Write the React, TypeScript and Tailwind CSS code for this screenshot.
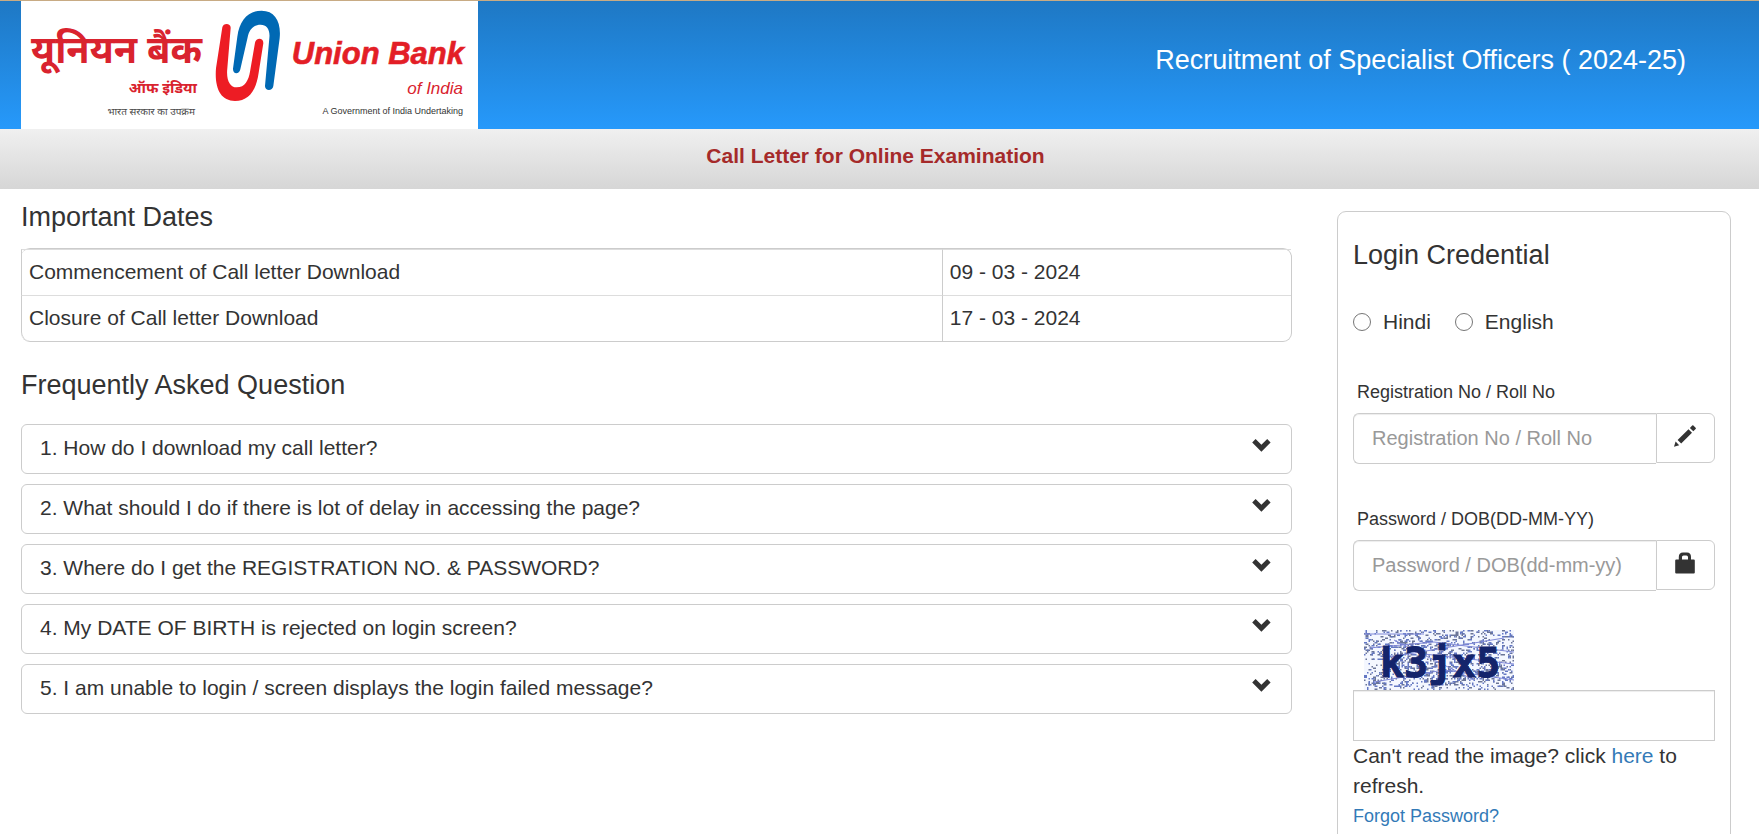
import React from "react";

const questions = [
  "1. How do I download my call letter?",
  "2. What should I do if there is lot of delay in accessing the page?",
  "3. Where do I get the REGISTRATION NO. & PASSWORD?",
  "4. My DATE OF BIRTH is rejected on login screen?",
  "5. I am unable to login / screen displays the login failed message?",
];

const dates = [
  { label: "Commencement of Call letter Download", value: "09 - 03 - 2024" },
  { label: "Closure of Call letter Download", value: "17 - 03 - 2024" },
];

function BankLogo() {
  return (
    <svg
      viewBox="0 0 457 128"
      className="h-32 w-[457px] shrink-0 bg-white"
      role="img"
      aria-label="Union Bank of India"
    >
      <g fill="#d9232e" fontFamily="'Noto Sans Devanagari', 'Lohit Devanagari', 'Noto Sans', FreeSans, sans-serif" fontWeight="700">
        <text x="10" y="62" fontSize="38">यूनियन बैंक</text>
        <text x="176" y="92" fontSize="15" textAnchor="end">ऑफ इंडिया</text>
        <text x="174" y="114" fontSize="10" fontWeight="400" fill="#4a4a4a" textAnchor="end">
          भारत सरकार का उपक्रम
        </text>
      </g>
      <g transform="translate(-21 -1) scale(0.33333)">
        <path
          fill="#ed1c24"
          d="M667 82C669 68 693 68 692 84L682 205C678 240 690 262 710 262C735 262 746 240 750 215L765 128C768 112 791 112 790 130L776 218C768 275 745 303 705 303C662 303 643 265 648 205Z"
        />
        <path
          fill="#0069b4"
          d="M699 206L712 110C719 60 745 32 785 32C825 32 844 65 839 115L820 258C818 274 795 274 795 258L808 115C811 88 800 74 782 74C762 74 747 88 743 112L721 208C718 224 698 224 699 206Z"
        />
      </g>
      <g fontFamily="'Liberation Sans', Arial, sans-serif" textAnchor="end">
        <text x="443" y="63" fontSize="31" fontWeight="700" fontStyle="italic" fill="#e31e26" stroke="#e31e26" strokeWidth="0.6">
          Union Bank
        </text>
        <text x="442" y="93" fontSize="17" fontStyle="italic" fill="#d9232e">of India</text>
        <text x="442" y="113" fontSize="9" fill="#333333">A Government of India Undertaking</text>
      </g>
    </svg>
  );
}

function Chevron() {
  return (
    <svg viewBox="0 0 19 13" className="h-[13px] w-[19px]" aria-hidden="true">
      <path fill="#333333" d="M3.6 0L0.2 3.6L9.4 12.7L18.6 3.6L15.2 0L9.4 5.8Z" />
    </svg>
  );
}

function Pencil() {
  return (
    <svg viewBox="0 0 22 22" className="h-[22px] w-[22px]" aria-hidden="true">
      <path fill="#333333" d="M0 21.8L1.6 16.6L5.2 20.2ZM3.6 14.9L14.5 4.2L18 7.7L7.2 18.4ZM15.9 2.9L18.2 0.6Q18.8 0 19.4 0.6L21.6 2.8Q22.2 3.4 21.6 4L19.3 6.3Z" />
    </svg>
  );
}

function Lock() {
  return (
    <svg viewBox="0 0 20 22" className="h-[22px] w-[20px]" aria-hidden="true">
      <path
        fill="#333333"
        fillRule="evenodd"
        d="M3.8 7.4V5Q3.8 0.4 8 0.4H12Q16 0.4 16 5V7.4H18.8Q19.8 7.4 19.8 8.4V20.4Q19.8 21.4 18.8 21.4H1.2Q0.2 21.4 0.2 20.4V8.4Q0.2 7.4 1.2 7.4ZM7 7.4H13V5Q13 3.4 11.4 3.4H8.6Q7 3.4 7 5Z"
      />
    </svg>
  );
}

/* Seeded speckles, so that the noise is the same on every render. */
function speckles(seed: number, density: number) {
  let s = seed;
  const next = () => {
    s = (s * 1103515245 + 12345) % 2147483648;
    return s / 2147483648;
  };
  let d = "";
  for (let y = 0; y < 40; y++) {
    for (let x = 0; x < 100; x++) {
      const busy = x > 20 && x < 90 && y > 6 && y < 34 ? 1.25 : 0.8;
      if (next() < density * busy) {
        const run = next() < 0.3 ? 2 : 1;
        d += `M${x * 1.5} ${y * 1.5}h${run * 1.5}v1.5h-${run * 1.5}z`;
      }
    }
  }
  return d;
}
const greySpecks = speckles(7, 0.16);
const blueSpecks = speckles(91, 0.14);

function Captcha() {
  return (
    <svg viewBox="0 0 150 60" className="ml-[11px] block h-[60px] w-[150px] bg-[#f4f7ff]" role="img" aria-label="Captcha">
      <path d={greySpecks} fill="#6a7598" />
      <path d={blueSpecks} fill="#6478c4" />
      <g fill="none" stroke="#7f88d8" strokeWidth="1">
        <path d="M0 4H60M5 18L70 12L150 22M20 28L140 8M10 52L80 40L150 50M60 24L150 34M30 10L110 50" />
      </g>
      <text
        x="16"
        y="47"
        fontFamily="'DejaVu Sans Mono', monospace"
        fontWeight="700"
        fontSize="40"
        fill="#14246b"
        stroke="#14246b"
        strokeWidth="1"
      >
        k3jx5
      </text>
    </svg>
  );
}

const inputClass =
  "h-[51px] border border-[#cccccc] bg-white px-[18px] text-[20px] text-[#555555] shadow-[inset_0_1px_1px_rgba(0,0,0,0.075)] outline-none placeholder:text-[#999999] placeholder:opacity-100";

const radioClass =
  "h-[18px] w-[18px] appearance-none rounded-full border border-[#767676] checked:border-[6px]";

function Field(props: { id: string; label: string; placeholder: string; type: string; icon: React.ReactNode }) {
  return (
    <div className="mt-[42px]">
      <label htmlFor={props.id} className="mb-2 block pl-1 text-[18px] leading-[26px]">
        {props.label}
      </label>
      <div className="flex items-start">
        <input
          id={props.id}
          type={props.type}
          placeholder={props.placeholder}
          className={`${inputClass} min-w-0 flex-1 rounded-l-md border-r-0`}
        />
        <span className="flex h-[50px] w-[59px] shrink-0 justify-center rounded-r-md border border-[#cccccc] pr-0.5 pt-[11px]">
          {props.icon}
        </span>
      </div>
    </div>
  );
}

export default function App() {
  return (
    <div className="min-h-screen bg-white font-['Liberation_Sans',Arial,sans-serif] text-[21px] leading-[30px] text-[#333333]">
      <header className="flex items-start justify-between border-t border-[#c8ab84] bg-linear-to-b from-[#1e78c4] to-[#2699fb] pl-[21px] pr-[73px]">
        <BankLogo />
        <h1 className="pt-11 text-[27px] text-white">Recruitment of Specialist Officers ( 2024-25)</h1>
      </header>
      <div className="h-[60px] bg-linear-to-b from-[#f0f0f0] to-[#d6d6d6] pr-2 pt-3 text-center font-bold text-[#a52a2a]">
        Call Letter for Online Examination
      </div>

      <div className="grid grid-cols-[minmax(0,1271fr)_minmax(0,394fr)] items-start gap-[45px] pl-[21px] pr-[28px]">
        <main className="pt-[13px]">
          <h2 className="text-[27px]">Important Dates</h2>
          <table className="mt-4 w-full border-separate border-spacing-0 rounded-[9px] border border-l-0 border-[#cccccc]">
            <tbody>
              {dates.map((row, i) => (
                <tr key={row.label}>
                  <td
                    className={`border-l border-t border-l-[#cccccc] border-t-[#dddddd] px-[7px] pb-2 pt-[7px] ${
                      i === dates.length - 1 ? "rounded-bl-[9px]" : ""
                    }`}
                  >
                    {row.label}
                  </td>
                  <td className="w-[27.5%] border-l border-t border-l-[#cccccc] border-t-[#dddddd] px-[7px] pb-2 pt-[7px]">
                    {row.value}
                  </td>
                </tr>
              ))}
            </tbody>
          </table>

          <h2 className="mt-7 text-[27px]">Frequently Asked Question</h2>
          <div className="mt-6 flex flex-col gap-[10px]">
            {questions.map((q) => (
              <button
                key={q}
                type="button"
                className="flex items-start justify-between rounded-md border border-[#cccccc] pb-[10px] pl-[18px] pr-5 pt-2 text-left"
              >
                <span>{q}</span>
                <span className="pt-[6px]">
                  <Chevron />
                </span>
              </button>
            ))}
          </div>
        </main>

        <aside className="mt-[22px] rounded-[9px] border border-[#cccccc] px-[15px] pb-8 pt-7">
          <h2 className="text-[27px]">Login Credential</h2>
          <div className="mt-[37px] flex">
            <label className="mr-6 flex items-center gap-3">
              <input type="radio" name="language" className={radioClass} />
              Hindi
            </label>
            <label className="flex items-center gap-3">
              <input type="radio" name="language" className={radioClass} />
              English
            </label>
          </div>
          <Field
            id="registration"
            type="text"
            label="Registration No / Roll No"
            placeholder="Registration No / Roll No"
            icon={<Pencil />}
          />
          <Field
            id="password"
            type="password"
            label="Password / DOB(DD-MM-YY)"
            placeholder="Password / DOB(dd-mm-yy)"
            icon={<Lock />}
          />
          <div className="mt-[39px]">
            <Captcha />
            <input type="text" aria-label="Captcha text" className={`${inputClass} block w-full`} />
          </div>
          <p>
            Can't read the image? click{" "}
            <a href="#refresh" className="text-[#337ab7]">
              here
            </a>{" "}
            to refresh.
          </p>
          <a href="#forgot" className="block text-[18px] leading-[30px] text-[#337ab7]">
            Forgot Password?
          </a>
        </aside>
      </div>
    </div>
  );
}
